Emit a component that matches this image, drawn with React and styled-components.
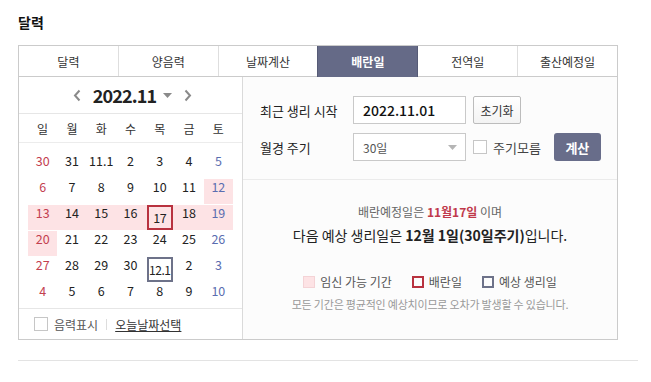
import React from "react";
import styled, { createGlobalStyle, css } from "styled-components";

const GlobalStyle = createGlobalStyle`
  body {
    margin: 0;
    background: #fff;
    font-family: "Noto Sans CJK KR", "Noto Sans", sans-serif;
    color: #222;
  }
`;

const Page = styled.div`
  width: 620px;
  padding: 13px 0 0 18px;
`;

const Title = styled.h2`
  margin: 0 0 13px;
  font-size: 14px;
  line-height: 19px;
  font-weight: 700;
  color: #111;
`;

const Box = styled.div`
  width: 598px;
  border: 1px solid #cbcbcb;
`;

const Tabs = styled.div`
  display: flex;
  height: 30px;
  border-bottom: 1px solid #cbcbcb;
`;

const Tab = styled.div`
  flex: 1;
  display: flex;
  align-items: center;
  justify-content: center;
  font-size: 12px;
  color: #333;
  border-right: 1px solid #dedede;
  &:last-child {
    border-right: none;
  }
  ${(p) =>
    p.$active &&
    css`
      background: #656a87;
      color: #fff;
      font-weight: 700;
      border-right-color: #565b76;
      margin-bottom: -1px;
      margin-left: -1px;
      border-left: 1px solid #565b76;
    `}
`;

const Body = styled.div`
  display: flex;
  height: 262px;
`;

const CalPanel = styled.div`
  width: 223px;
  border-right: 1px solid #dadada;
  display: flex;
  flex-direction: column;
`;

const CalHead = styled.div`
  height: 36px;
  display: flex;
  align-items: center;
  justify-content: center;
  gap: 12px;
  padding-left: 4px;
  border-bottom: 1px solid #e6e6e6;
`;

const YearMonth = styled.div`
  display: flex;
  align-items: center;
  gap: 7px;
  font-size: 18px;
  font-weight: 700;
  color: #222;
  letter-spacing: -0.9px;
`;

const NavBtn = styled.span`
  display: flex;
  align-items: center;
`;

const Weekdays = styled.div`
  display: grid;
  grid-template-columns: repeat(7, 1fr);
  padding: 0 9px;
  height: 28px;
  align-items: center;
  border-bottom: 1px solid #ececec;
  font-size: 12px;
  color: #333;
  text-align: center;
`;

const Days = styled.div`
  display: grid;
  grid-template-columns: repeat(7, 1fr);
  grid-auto-rows: 25px;
  row-gap: 1px;
  padding: 10px 9px 0;
  height: 155px;
`;

const dayColor = { sun: "#c3404f", sat: "#5a6db0", normal: "#222" };

const Day = styled.div`
  display: flex;
  justify-content: center;
  align-items: flex-start;
  font-size: 12.5px;
  line-height: 15px;
  color: ${(p) => dayColor[p.$kind]};
  background: ${(p) => (p.$fertile ? "#fde3e5" : "transparent")};
`;

const Marked = styled.span`
  box-sizing: border-box;
  width: 26px;
  height: 25px;
  display: flex;
  align-items: center;
  justify-content: center;
  border: 2px solid ${(p) => (p.$type === "ovul" ? "#b8323f" : "#6d7289")};
  font-size: ${(p) => (p.$type === "ovul" ? "12.5px" : "12px")};
  letter-spacing: -0.5px;
`;

const CalFoot = styled.div`
  margin-top: auto;
  height: 30px;
  border-top: 1px solid #e6e6e6;
  display: flex;
  align-items: center;
  padding-left: 15px;
  font-size: 12px;
  color: #555;
`;

const Check = styled.span`
  box-sizing: border-box;
  width: 14px;
  height: 14px;
  border: 1px solid #c6c6c6;
  background: #fff;
  margin-right: 6px;
  flex-shrink: 0;
`;

const Sep = styled.span`
  width: 1px;
  height: 11px;
  background: #ddd;
  margin: 0 8px;
`;

const LinkText = styled.span`
  color: #333;
  text-decoration: underline;
`;

const ResultPanel = styled.div`
  flex: 1;
  background: #fcfcfc;
  display: flex;
  flex-direction: column;
`;

const Form = styled.div`
  padding: 19px 0 0 17px;
  height: 83px;
  border-bottom: 1px solid #ebebeb;
  display: flex;
  flex-direction: column;
  gap: 9px;
`;

const FormRow = styled.div`
  display: flex;
  align-items: center;
  height: 28px;
`;

const Label = styled.span`
  width: 93px;
  font-size: 13px;
  color: #222;
`;

const Field = styled.div`
  box-sizing: border-box;
  width: 113px;
  height: 28px;
  border: 1px solid #c9c9c9;
  background: #fff;
  display: flex;
  align-items: center;
  justify-content: space-between;
  padding: 0 8px 0 9px;
  font-size: ${(p) => (p.$muted ? "12px" : "14px")};
  font-weight: ${(p) => (p.$muted ? 400 : 500)};
  color: ${(p) => (p.$muted ? "#555" : "#111")};
`;

const Button = styled.span`
  box-sizing: border-box;
  height: 28px;
  display: flex;
  align-items: center;
  justify-content: center;
  border-radius: 2px;
  font-size: 12px;
  ${(p) =>
    p.$primary
      ? css`
          width: 47px;
          margin-left: 13px;
          background: #686d8a;
          color: #fff;
          font-weight: 700;
          border-radius: 3px;
          font-size: 13px;
        `
      : css`
          width: 48px;
          margin-left: 7px;
          border: 1px solid #bcbcbc;
          background: linear-gradient(#fff, #f3f3f3);
          color: #333;
        `}
`;

const CheckLabel = styled.label`
  display: flex;
  align-items: center;
  margin-left: 7px;
  font-size: 13px;
  color: #444;
`;

const Summary = styled.div`
  display: flex;
  flex-direction: column;
  align-items: center;
  padding-top: 23px;
`;

const Line1 = styled.p`
  margin: 0;
  font-size: 12px;
  line-height: 18px;
  color: #666;
  b {
    color: #c0394b;
  }
`;

const Line2 = styled.p`
  margin: 4px 0 0;
  font-size: 14px;
  line-height: 20px;
  color: #222;
  b {
    font-weight: 700;
  }
`;

const Legend = styled.div`
  display: flex;
  gap: 20px;
  margin-top: 28px;
  font-size: 12px;
  color: #555;
`;

const LegendItem = styled.span`
  display: flex;
  align-items: center;
  gap: 5px;
`;

const swatch = {
  fertile: css`
    background: #fde3e5;
    border: 1px solid #f4d3d6;
  `,
  ovul: css`
    border: 2px solid #b8323f;
  `,
  period: css`
    border: 2px solid #6d7289;
  `,
};

const Swatch = styled.span`
  box-sizing: border-box;
  width: 12px;
  height: 12px;
  ${(p) => swatch[p.$type]}
`;

const Note = styled.p`
  margin: 6px 0 0;
  font-size: 11px;
  color: #999;
  letter-spacing: -0.2px;
`;

const Rule = styled.div`
  height: 1px;
  background: #e3e3e3;
  margin-top: 20px;
`;

const Chevron = ({ dir }) => (
  <svg width="8" height="13" viewBox="0 0 8 13">
    <path
      d={dir === "left" ? "M6.5 1.5 L2 6.5 L6.5 11.5" : "M1.5 1.5 L6 6.5 L1.5 11.5"}
      fill="none"
      stroke="#8a8a8a"
      strokeWidth="2"
    />
  </svg>
);

const Caret = ({ color = "#8a8a8a" }) => (
  <svg width="9" height="5" viewBox="0 0 9 5">
    <path d="M0 0 L9 0 L4.5 5 Z" fill={color} />
  </svg>
);

const tabs = ["달력", "양음력", "날짜계산", "배란일", "전역일", "출산예정일"];
const weekdays = ["일", "월", "화", "수", "목", "금", "토"];

const weeks = [
  ["30", "31", "11.1", "2", "3", "4", "5"],
  ["6", "7", "8", "9", "10", "11", "12"],
  ["13", "14", "15", "16", "17", "18", "19"],
  ["20", "21", "22", "23", "24", "25", "26"],
  ["27", "28", "29", "30", "12.1", "2", "3"],
  ["4", "5", "6", "7", "8", "9", "10"],
];

const fertile = new Set(["1-6", "2-0", "2-1", "2-2", "2-3", "2-4", "2-5", "2-6", "3-0"]);
const marked = { "2-4": "ovul", "4-4": "period" };

export default function App() {
  return (
    <Page>
      <GlobalStyle />
      <Title>달력</Title>
      <Box>
        <Tabs>
          {tabs.map((t) => (
            <Tab key={t} $active={t === "배란일"}>
              {t}
            </Tab>
          ))}
        </Tabs>
        <Body>
          <CalPanel>
            <CalHead>
              <NavBtn>
                <Chevron dir="left" />
              </NavBtn>
              <YearMonth>
                2022.11
                <Caret />
              </YearMonth>
              <NavBtn>
                <Chevron dir="right" />
              </NavBtn>
            </CalHead>
            <Weekdays>
              {weekdays.map((w) => (
                <span key={w}>{w}</span>
              ))}
            </Weekdays>
            <Days>
              {weeks.map((week, r) =>
                week.map((d, c) => {
                  const key = `${r}-${c}`;
                  const kind = c === 0 ? "sun" : c === 6 ? "sat" : "normal";
                  return (
                    <Day key={key} $kind={kind} $fertile={fertile.has(key)}>
                      {marked[key] ? <Marked $type={marked[key]}>{d}</Marked> : d}
                    </Day>
                  );
                })
              )}
            </Days>
            <CalFoot>
              <Check />
              음력표시
              <Sep />
              <LinkText>오늘날짜선택</LinkText>
            </CalFoot>
          </CalPanel>
          <ResultPanel>
            <Form>
              <FormRow>
                <Label>최근 생리 시작</Label>
                <Field>2022.11.01</Field>
                <Button>초기화</Button>
              </FormRow>
              <FormRow>
                <Label>월경 주기</Label>
                <Field $muted>
                  30일
                  <Caret color="#b5b5b5" />
                </Field>
                <CheckLabel>
                  <Check />
                  주기모름
                </CheckLabel>
                <Button $primary>계산</Button>
              </FormRow>
            </Form>
            <Summary>
              <Line1>
                배란예정일은 <b>11월17일</b> 이며
              </Line1>
              <Line2>
                다음 예상 생리일은 <b>12월 1일(30일주기)</b>입니다.
              </Line2>
              <Legend>
                <LegendItem>
                  <Swatch $type="fertile" />
                  임신 가능 기간
                </LegendItem>
                <LegendItem>
                  <Swatch $type="ovul" />
                  배란일
                </LegendItem>
                <LegendItem>
                  <Swatch $type="period" />
                  예상 생리일
                </LegendItem>
              </Legend>
              <Note>모든 기간은 평균적인 예상치이므로 오차가 발생할 수 있습니다.</Note>
            </Summary>
          </ResultPanel>
        </Body>
      </Box>
      <Rule />
    </Page>
  );
}
